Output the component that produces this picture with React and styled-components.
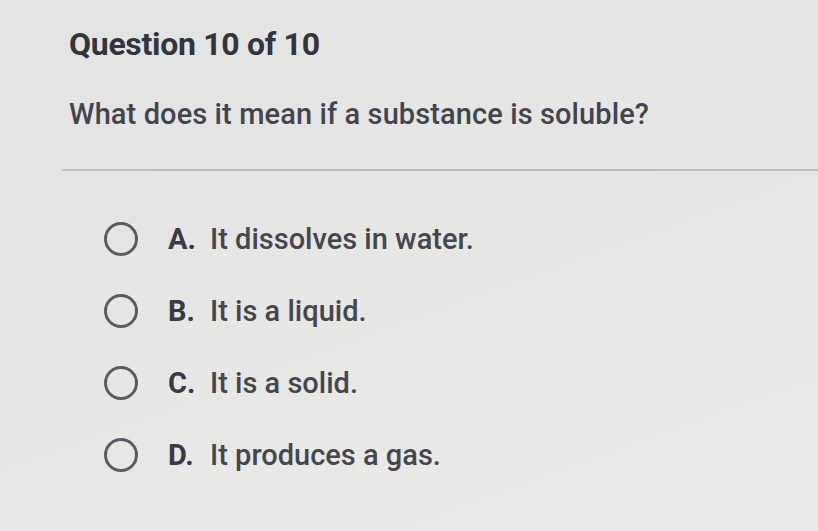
import styled, { createGlobalStyle } from "styled-components";

const GlobalStyle = createGlobalStyle`
  html, body {
    margin: 0;
    padding: 0;
  }
  body {
    background: linear-gradient(160deg, #e2e4e2 0%, #e6e6e5 45%, #ecebea 100%);
    font-family: Roboto, "Liberation Sans", Arial, sans-serif;
    width: 818px;
    height: 531px;
    overflow: hidden;
  }
`;

const choices = [
  { letter: "A", text: "It dissolves in water." },
  { letter: "B", text: "It is a liquid." },
  { letter: "C", text: "It is a solid." },
  { letter: "D", text: "It produces a gas." },
];

const App = () => {
  return (
    <Page>
      <GlobalStyle />
      <Header>
        <Title>Question 10 of 10</Title>
        <Prompt>What does it mean if a substance is soluble?</Prompt>
      </Header>
      <Divider />
      <ChoiceList>
        {choices.map((c) => (
          <Choice key={c.letter}>
            <Radio />
            <Letter>{c.letter}.</Letter>
            <ChoiceText>{c.text}</ChoiceText>
          </Choice>
        ))}
      </ChoiceList>
    </Page>
  );
};

export default App;

const Page = styled.div`
  display: flex;
  flex-direction: column;
  width: 818px;
  height: 531px;
  padding-top: 26px;
  box-sizing: border-box;
`;

const Header = styled.div`
  display: flex;
  flex-direction: column;
  gap: 34px;
  padding-left: 69px;
`;

const Title = styled.h1`
  margin: 0;
  font-size: 32px;
  line-height: 36px;
  font-weight: 700;
  color: #34343e;
  letter-spacing: -0.3px;
`;

const Prompt = styled.p`
  margin: 0;
  font-size: 29px;
  line-height: 36px;
  font-weight: 500;
  color: #44444f;
  letter-spacing: 0.1px;
`;

const Divider = styled.hr`
  margin: 37px 0 0 62px;
  border: 0;
  border-top: 2px solid #bcbcbc;
  height: 0;
`;

const ChoiceList = styled.div`
  display: flex;
  flex-direction: column;
  gap: 38px;
  padding: 51px 0 0 104px;
`;

const Choice = styled.div`
  display: flex;
  align-items: center;
  height: 34px;
`;

const Radio = styled.span`
  width: 28px;
  height: 28px;
  border: 3px solid #5b5b62;
  border-radius: 50%;
  flex-shrink: 0;
`;

const Letter = styled.span`
  margin-left: 30px;
  width: 42px;
  font-size: 29px;
  font-weight: 700;
  color: #3a3a46;
`;

const ChoiceText = styled.span`
  font-size: 29px;
  font-weight: 500;
  color: #46464f;
`;
